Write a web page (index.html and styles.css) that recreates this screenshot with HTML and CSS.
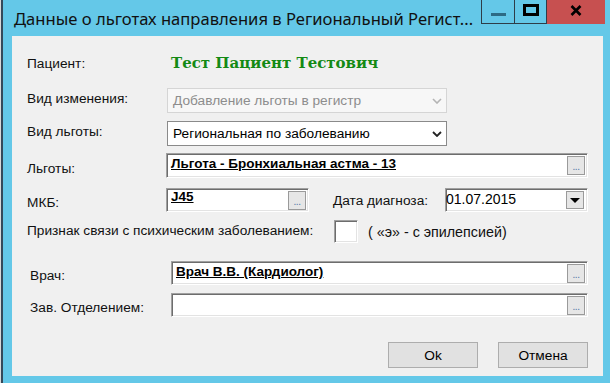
FILE: index.html
```html
<!DOCTYPE html>
<html>
<head>
    <title>Данные о льготах</title>
    <meta charset="utf-8">
<link rel="stylesheet" href="styles.css">
</head>
<body>

  <div class="window">

    <div class="titlebar">
      <div class="title">Данные о льготах направления в Региональный Регист...</div>
      <div class="caption">
        <div class="cbtn min"><span class="min-bar"></span></div>
        <div class="cbtn max"><span class="max-box"></span></div>
        <div class="cbtn close">
          <svg width="12" height="11" viewBox="0 0 12 11">
            <path d="M1.5 1 L10.5 10 M10.5 1 L1.5 10" stroke="#000" stroke-width="2.6" fill="none"/>
          </svg>
        </div>
      </div>
    </div>

    <div class="client">

      <div class="row row-patient">
        <span class="label">Пациент:</span>
        <span class="patient">Тест Пациент Тестович</span>
      </div>

      <div class="row row-change">
        <span class="label high">Вид изменения:</span>
        <div class="combo disabled">
          <span>Добавление льготы в регистр</span>
          <svg class="chev" width="10" height="6" viewBox="0 0 10 6"><path d="M1 1 L5 5 L9 1" stroke="#b4b4b4" stroke-width="1.6" fill="none"/></svg>
        </div>
      </div>

      <div class="row row-kind">
        <span class="label high">Вид льготы:</span>
        <div class="combo">
          <span>Региональная по заболеванию</span>
          <svg class="chev" width="10" height="6" viewBox="0 0 10 6"><path d="M1 1 L5 5 L9 1" stroke="#222" stroke-width="1.8" fill="none"/></svg>
        </div>
      </div>

      <div class="row row-benefit">
        <span class="label low">Льготы:</span>
        <div class="field wide">
          <span class="value">Льгота - Бронхиальная астма - 13</span>
          <span class="dots">...</span>
        </div>
      </div>

      <div class="row row-mkb">
        <span class="label low">МКБ:</span>
        <div class="field mkb">
          <span class="value top">J45</span>
          <span class="dots">...</span>
        </div>
        <span class="label date-label">Дата диагноза:</span>
        <div class="field date">
          <span class="date-text">01.07.2015</span>
          <span class="drop"><span class="tri"></span></span>
        </div>
      </div>

      <div class="row row-sign">
        <span class="label sign-label high-1">Признак связи с психическим заболеванием:</span>
        <div class="field box"></div>
        <span class="hint">( «э» - с эпилепсией)</span>
      </div>

      <div class="doctors">
        <div class="row row-doctor">
          <span class="label low">Врач:</span>
          <div class="field wide">
            <span class="value">Врач В.В. (Кардиолог)</span>
            <span class="dots">...</span>
          </div>
        </div>

        <div class="row row-head">
          <span class="label low">Зав. Отделением:</span>
          <div class="field wide">
            <span class="value"></span>
            <span class="dots">...</span>
          </div>
        </div>
      </div>

      <div class="row buttons">
        <button class="btn">Ok</button>
        <button class="btn">Отмена</button>
      </div>

    </div>
  </div>

</body>
</html>
```

FILE: styles.css
```css
body {
  margin: 0;
  background-color: #64c8e8;
  font-family: "Liberation Sans", Arial, sans-serif;
  font-size: 13.7px;
  color: #000;
}

.window {
  width: 610px;
  height: 383px;
  box-sizing: border-box;
  border-left: 1px solid #d8d8d8;
  box-shadow: inset 2px 0 0 #34495a;
  display: flex;
  flex-direction: column;
  background-color: #64c8e8;
}

/* title bar */

.titlebar {
  height: 36px;
  display: flex;
  align-items: flex-start;
  padding-left: 13px;
}

.title {
  font-family: "Noto Sans", sans-serif;
  font-size: 16.6px;
  line-height: 22px;
  padding-top: 8px;
  white-space: nowrap;
  color: #111;
}

.caption {
  margin-left: auto;
  margin-right: 5px;
  display: flex;
  height: 24px;
}

.cbtn {
  box-sizing: border-box;
  height: 24px;
  display: flex;
  justify-content: center;
}

.cbtn.min {
  width: 34px;
  border: 1px solid #2e3d48;
  border-top: none;
  align-items: flex-end;
  padding-bottom: 7px;
}

.cbtn.max {
  width: 32px;
  border-bottom: 1px solid #2e3d48;
  border-right: 1px solid #2e3d48;
  align-items: flex-start;
  padding-top: 4px;
}

.cbtn.close {
  width: 58px;
  background-color: #c75050;
  align-items: flex-start;
  padding-top: 5px;
}

.min-bar {
  width: 15px;
  height: 3px;
  background-color: #2d6b84;
}

.max-box {
  width: 16px;
  height: 12px;
  box-sizing: border-box;
  border: 3px solid #000;
}

/* client area */

.client {
  flex: 1;
  margin: 0 7px 7px 11px;
  padding: 0 15px;
  background-color: #f0f0f0;
  display: flex;
  flex-direction: column;
}

.row {
  display: flex;
  align-items: center;
}

.label {
  width: 139px;
  flex-shrink: 0;
  white-space: nowrap;
  color: #111;
}

.label.low { padding-top: 5px; }
.label.high { padding-bottom: 5px; }
.label.high-1 { padding-bottom: 2px; }

.row-patient { margin-top: 17px; height: 20px; }
.row-change { margin-top: 15px; height: 25px; }
.row-kind { margin-top: 8px; height: 25px; }
.row-benefit { margin-top: 7px; height: 25px; }
.row-mkb { margin-top: 10px; height: 24px; }
.row-sign { margin-top: 8px; height: 23px; }
.row-doctor { margin-top: 18px; height: 24px; }
.row-head { margin-top: 8px; height: 24px; }

.patient {
  margin-left: 5px;
  font-family: "DejaVu Serif", "Liberation Serif", serif;
  font-weight: bold;
  font-size: 15px;
  color: #148a14;
}

/* combo boxes */

.combo {
  box-sizing: border-box;
  width: 280px;
  height: 25px;
  margin-left: 1px;
  border: 1px solid #8a8a8a;
  background-color: #fff;
  display: flex;
  align-items: center;
  padding: 0 4px 0 5px;
}

.combo.disabled {
  border-color: #d5d5d5;
  background-color: #f7f7f7;
  color: #8d8d8d;
}

.combo .chev {
  margin-left: auto;
}

/* sunken fields */

.field {
  box-sizing: border-box;
  height: 100%;
  background-color: #fff;
  border: 1px solid;
  border-color: #a0a0a0 #ffffff #ffffff #a0a0a0;
  box-shadow: inset 1px 1px 0 #6d6d6d, inset -1px -1px 0 #e3e3e3;
  display: flex;
  align-items: flex-start;
}

.field.wide { flex: 1; }
.field.mkb { width: 143px; }
.field.date { width: 143px; }
.field.box { width: 24px; }

.value {
  padding: 2px 0 0 4px;
  line-height: 15px;
  font-size: 13.5px;
  font-weight: bold;
  text-decoration: underline;
  white-space: nowrap;
}

.value.top { padding-top: 0; }

.dots {
  margin-left: auto;
  margin-right: 2px;
  align-self: center;
  box-sizing: border-box;
  width: 18px;
  height: 19px;
  border: 1px solid #9a9a9a;
  background-color: #e6e6e6;
  color: #4f75a6;
  font-size: 10px;
  line-height: 10px;
  text-align: center;
  padding-top: 5px;
  letter-spacing: -0.5px;
}

.date-label {
  width: 112px;
  margin-left: 24px;
}

.date-text {
  font-size: 14px;
  line-height: 16px;
  padding-top: 2px;
}

.drop {
  margin-left: auto;
  margin-right: 3px;
  align-self: center;
  box-sizing: border-box;
  width: 18px;
  height: 18px;
  border: 1px solid #9a9a9a;
  background-color: #e6e6e6;
  display: flex;
  align-items: center;
  justify-content: center;
}

.tri {
  width: 0;
  height: 0;
  border-left: 5px solid transparent;
  border-right: 5px solid transparent;
  border-top: 5px solid #000;
}

.sign-label { width: 307px; }

.hint {
  margin-left: 10px;
  font-size: 14.3px;
  color: #111;
}

.doctors {
  padding-left: 3px;
}

.doctors .label { width: 141px; }

/* buttons */

.buttons {
  margin-top: 25px;
  justify-content: flex-end;
  gap: 20px;
}

.btn {
  width: 90px;
  height: 26px;
  border: 1px solid #adadad;
  background-color: #e1e1e1;
  font-family: "Liberation Sans", Arial, sans-serif;
  font-size: 13.7px;
  color: #000;
  padding: 0;
}
```
